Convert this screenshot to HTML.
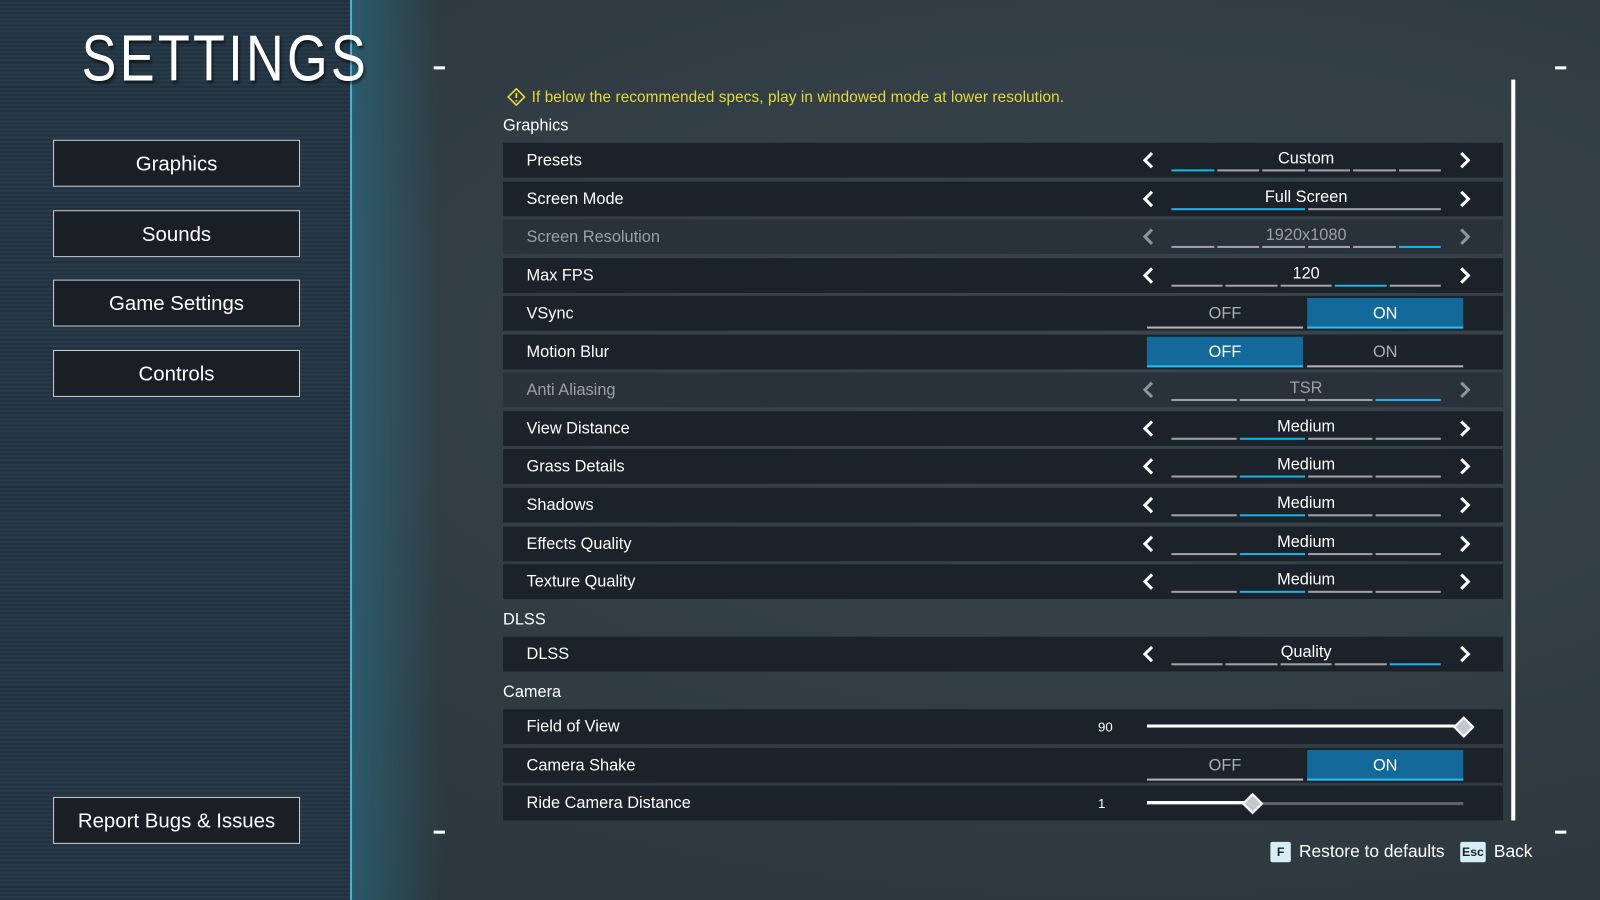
<!DOCTYPE html>
<html><head><meta charset="utf-8"><style>
html,body{margin:0;padding:0;width:1600px;height:900px;overflow:hidden;background:#2f3b43;}
#w{position:absolute;left:0;top:0;width:1568px;height:882px;transform:scale(1.02041);transform-origin:0 0;font-family:"Liberation Sans",sans-serif;color:#fff;
background:radial-gradient(ellipse at 70% 40%,#3a464e 0%,#2f3a41 60%,#2a343b 100%);}
#left{position:absolute;left:0;top:0;width:343px;height:882px;background:repeating-linear-gradient(0deg,#22323f 0,#22323f 2px,#283a4a 2px,#283a4a 4px);}
#line{position:absolute;left:343px;top:0;width:2px;height:882px;background:#3fb4d6;}
#glow{position:absolute;left:345px;top:0;width:90px;height:882px;background:linear-gradient(90deg,rgba(40,140,170,.4),rgba(40,120,150,0));}
h1{position:absolute;left:80px;top:20px;margin:0;font-weight:300;font-size:64px;letter-spacing:4px;color:#fff;text-shadow:2px 3px 3px rgba(0,0,0,.5);transform:scaleX(0.8);transform-origin:0 0;}
.btn{position:absolute;left:52px;width:242px;height:46px;background:#1a1f26;border:1px solid #c8ccd0;display:flex;align-items:center;justify-content:center;font-size:20px;padding-top:2px;box-sizing:border-box;}
.dash{position:absolute;width:11px;height:3px;background:#fff;}
.warn{position:absolute;left:497px;top:86px;font-size:15px;color:#e6d93a;display:flex;align-items:center;gap:6px;letter-spacing:0.1px;}
.sec{position:absolute;left:493px;font-size:16px;}
.row{position:absolute;left:493px;width:980px;height:34px;background:#1b2229;}
.row.dis{background:#29323a;}
.row .l{position:absolute;left:23px;top:9px;font-size:16px;}
.row.dis .l,.row.dis .v{color:#9aa0a6;}
.ar{position:absolute;top:8px;width:18px;height:18px;}
.v{position:absolute;left:655px;width:264px;top:7px;text-align:center;font-size:16px;}
.segs{position:absolute;left:655px;width:264px;top:26px;height:2px;display:flex;gap:3px;}
.segs i{flex:1;background:#9ea3a8;}
.segs i.b{background:#1fb0e6;}
.tg{position:absolute;top:2px;width:153px;height:30px;display:flex;align-items:center;justify-content:center;font-size:16px;color:#aab0b5;border-bottom:2px solid #b0b5b9;box-sizing:border-box;padding-top:3px;}
.tg.on{background:#13699a;color:#fff;border-bottom-color:#25c0f0;}
.num{position:absolute;font-size:13px;top:10px;}
.foot{position:absolute;top:825px;font-size:17px;display:flex;align-items:center;}
.key{display:inline-flex;align-items:center;justify-content:center;background:#d6eef5;color:#1b2229;font-weight:bold;border-radius:2px;height:20px;margin-right:8px;font-size:12px;}
</style></head><body><div id="w">
<div id="left"></div><div id="glow"></div><div id="line"></div>
<h1>SETTINGS</h1>
<div class="btn" style="top:137px">Graphics</div>
<div class="btn" style="top:206px">Sounds</div>
<div class="btn" style="top:274px">Game Settings</div>
<div class="btn" style="top:343px">Controls</div>
<div class="btn" style="top:781px">Report Bugs &amp; Issues</div>
<div class="dash" style="left:425px;top:65px"></div>
<div class="dash" style="left:425px;top:814px"></div>
<div class="dash" style="left:1524px;top:65px"></div>
<div class="dash" style="left:1524px;top:814px"></div>
<div style="position:absolute;left:1481px;top:78px;width:4px;height:726px;background:#fff"></div>
<div class="warn"><svg width="18" height="18" viewBox="0 0 18 18"><path d="M9 1 L17 9 L9 17 L1 9 Z" fill="none" stroke="#e6d93a" stroke-width="1.6"/><path d="M9 5v5M9 12v1.5" stroke="#e6d93a" stroke-width="1.8"/></svg>If below the recommended specs, play in windowed mode at lower resolution.</div>
<div class="sec" style="top:115px">Graphics</div>
<div class="sec" style="top:599px">DLSS</div>
<div class="sec" style="top:670px">Camera</div>

<div class="row" style="top:140px"><div class="l">Presets</div><div class="v">Custom</div><div class="segs"><i class="b"></i><i></i><i></i><i></i><i></i><i></i></div></div>
<div class="row" style="top:178px"><div class="l">Screen Mode</div><div class="v">Full Screen</div><div class="segs"><i class="b"></i><i></i></div></div>
<div class="row dis" style="top:215px"><div class="l">Screen Resolution</div><div class="v">1920x1080</div><div class="segs"><i></i><i></i><i></i><i></i><i></i><i class="b"></i></div></div>
<div class="row" style="top:253px"><div class="l">Max FPS</div><div class="v">120</div><div class="segs"><i></i><i></i><i></i><i class="b"></i><i></i></div></div>
<div class="row" style="top:290px"><div class="l">VSync</div><div class="tg" style="left:631px">OFF</div><div class="tg on" style="left:788px">ON</div></div>
<div class="row" style="top:328px"><div class="l">Motion Blur</div><div class="tg on" style="left:631px">OFF</div><div class="tg" style="left:788px">ON</div></div>
<div class="row dis" style="top:365px"><div class="l">Anti Aliasing</div><div class="v">TSR</div><div class="segs"><i></i><i></i><i></i><i class="b"></i></div></div>
<div class="row" style="top:403px"><div class="l">View Distance</div><div class="v">Medium</div><div class="segs"><i></i><i class="b"></i><i></i><i></i></div></div>
<div class="row" style="top:440px"><div class="l">Grass Details</div><div class="v">Medium</div><div class="segs"><i></i><i class="b"></i><i></i><i></i></div></div>
<div class="row" style="top:478px"><div class="l">Shadows</div><div class="v">Medium</div><div class="segs"><i></i><i class="b"></i><i></i><i></i></div></div>
<div class="row" style="top:516px"><div class="l">Effects Quality</div><div class="v">Medium</div><div class="segs"><i></i><i class="b"></i><i></i><i></i></div></div>
<div class="row" style="top:553px"><div class="l">Texture Quality</div><div class="v">Medium</div><div class="segs"><i></i><i class="b"></i><i></i><i></i></div></div>
<div class="row" style="top:624px"><div class="l">DLSS</div><div class="v">Quality</div><div class="segs"><i></i><i></i><i></i><i></i><i class="b"></i></div></div>
<div class="row" style="top:695px"><div class="l">Field of View</div><div class="num" style="left:583px">90</div>
<div style="position:absolute;left:631px;top:15px;width:310px;height:3px;background:#fff"></div>
<div style="position:absolute;left:934px;top:10px;width:11px;height:11px;background:#c4c8cc;border:2px solid #fff;transform:rotate(45deg)"></div></div>
<div class="row" style="top:733px"><div class="l">Camera Shake</div><div class="tg" style="left:631px">OFF</div><div class="tg on" style="left:788px">ON</div></div>
<div class="row" style="top:770px"><div class="l">Ride Camera Distance</div><div class="num" style="left:583px">1</div>
<div style="position:absolute;left:631px;top:16px;width:310px;height:3px;background:#5d656c"></div>
<div style="position:absolute;left:631px;top:15px;width:104px;height:3px;background:#fff"></div>
<div style="position:absolute;left:727px;top:10px;width:11px;height:11px;background:#c4c8cc;border:2px solid #fff;transform:rotate(45deg)"></div></div>

<div class="foot" style="left:1245px"><span class="key" style="width:20px">F</span>Restore to defaults</div>
<div class="foot" style="left:1431px"><span class="key" style="width:25px">Esc</span>Back</div>
<script>
document.querySelectorAll('.row').forEach(r=>{if(!r.querySelector('.v'))return;var c=r.classList.contains('dis')?'#8d949a':'#fff';
r.insertAdjacentHTML('beforeend','<svg class="ar" style="left:624px" viewBox="0 0 18 18"><path d="M12 2 L5 9 L12 16" fill="none" stroke="'+c+'" stroke-width="3"/></svg><svg class="ar" style="left:933px" viewBox="0 0 18 18"><path d="M6 2 L13 9 L6 16" fill="none" stroke="'+c+'" stroke-width="3"/></svg>');});
</script>
</div></body></html>
